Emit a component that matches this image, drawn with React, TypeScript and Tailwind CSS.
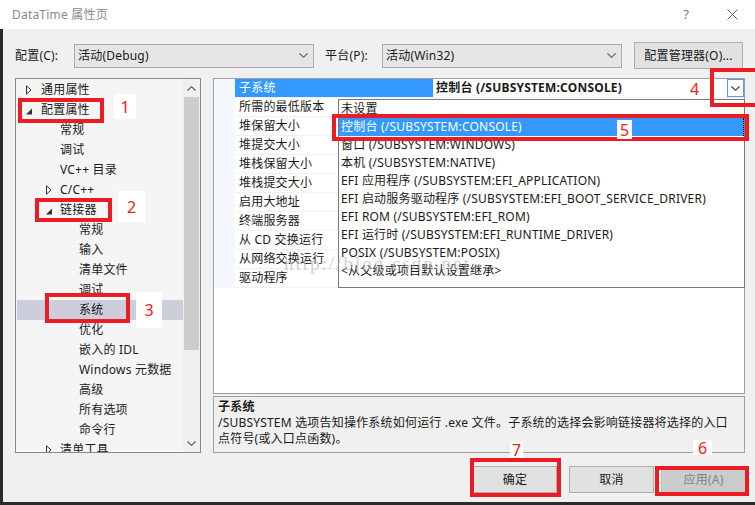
import React from 'react';

type TreeItem = { t: string; k: 'l0c' | 'l0o' | 'l1c' | 'l1o' | 'l1' | 'l2'; sel?: boolean };

const tree: TreeItem[] = [
  { t: '通用属性', k: 'l0c' },
  { t: '配置属性', k: 'l0o' },
  { t: '常规', k: 'l1' },
  { t: '调试', k: 'l1' },
  { t: 'VC++ 目录', k: 'l1' },
  { t: 'C/C++', k: 'l1c' },
  { t: '链接器', k: 'l1o' },
  { t: '常规', k: 'l2' },
  { t: '输入', k: 'l2' },
  { t: '清单文件', k: 'l2' },
  { t: '调试', k: 'l2' },
  { t: '系统', k: 'l2', sel: true },
  { t: '优化', k: 'l2' },
  { t: '嵌入的 IDL', k: 'l2' },
  { t: 'Windows 元数据', k: 'l2' },
  { t: '高级', k: 'l2' },
  { t: '所有选项', k: 'l2' },
  { t: '命令行', k: 'l2' },
  { t: '清单工具', k: 'l1c' },
];

const props = [
  '子系统',
  '所需的最低版本',
  '堆保留大小',
  '堆提交大小',
  '堆栈保留大小',
  '堆栈提交大小',
  '启用大地址',
  '终端服务器',
  '从 CD 交换运行',
  '从网络交换运行',
  '驱动程序',
];

const options = [
  '未设置',
  '控制台 (/SUBSYSTEM:CONSOLE)',
  '窗口 (/SUBSYSTEM:WINDOWS)',
  '本机 (/SUBSYSTEM:NATIVE)',
  'EFI 应用程序 (/SUBSYSTEM:EFI_APPLICATION)',
  'EFI 启动服务驱动程序 (/SUBSYSTEM:EFI_BOOT_SERVICE_DRIVER)',
  'EFI ROM (/SUBSYSTEM:EFI_ROM)',
  'EFI 运行时 (/SUBSYSTEM:EFI_RUNTIME_DRIVER)',
  'POSIX (/SUBSYSTEM:POSIX)',
  '<从父级或项目默认设置继承>',
];

function Closed() {
  return (
    <svg width="6" height="10" viewBox="0 0 6 10">
      <path d="M0.5 0.8 L5 5 L0.5 9.2 Z" fill="none" stroke="#333" strokeWidth="1" />
    </svg>
  );
}
function Open() {
  return (
    <svg width="6" height="7" viewBox="0 0 6 7" className="mt-[2px]">
      <path d="M6 0.5 L6 6.5 L0 6.5 Z" fill="#333" />
    </svg>
  );
}

function Chevron({ up = false, color = '#606060' }: { up?: boolean; color?: string }) {
  return (
    <svg width="9" height="5" viewBox="0 0 9 5">
      <path d={up ? 'M0.5 4.5 L4.5 0.7 L8.5 4.5' : 'M0.5 0.5 L4.5 4.3 L8.5 0.5'} fill="none" stroke={color} strokeWidth="1.1" />
    </svg>
  );
}

function TreeRow({ it }: { it: TreeItem }) {
  const base = 'h-[20px] flex items-center whitespace-nowrap';
  const sel = it.sel ? ' bg-[#cccedb] ml-[1px]' : '';
  if (it.k === 'l0c' || it.k === 'l0o') {
    return (
      <div className={base + ' pl-[10px]' + sel}>
        <span className="w-[15px] flex items-center">{it.k === 'l0c' ? <Closed /> : <Open />}</span>
        <span>{it.t}</span>
      </div>
    );
  }
  if (it.k === 'l1c' || it.k === 'l1o') {
    return (
      <div className={base + ' pl-[30px]' + sel}>
        <span className="w-[14px] flex items-center">{it.k === 'l1c' ? <Closed /> : <Open />}</span>
        <span>{it.t}</span>
      </div>
    );
  }
  if (it.k === 'l1') {
    return <div className={base + ' pl-[44px]' + sel}>{it.t}</div>;
  }
  return <div className={base + (it.sel ? ' pl-[62px] bg-[#cccedb] ml-[1px]' : ' pl-[63px]')}>{it.t}</div>;
}

function RedBox({ c }: { c: string }) {
  return <div className={'absolute border-[4px] border-[#ec1c24] ' + c} />;
}
function Label({ c, n }: { c: string; n: string }) {
  return (
    <div className={'absolute bg-white flex items-center justify-center text-[16px] leading-none tracking-normal text-[#ec1c24] ' + c}>
      {n}
    </div>
  );
}

export default function App() {
  return (
    <div className="relative w-[755px] h-[505px] overflow-hidden bg-[#2b2b2b] flex flex-col font-['Noto_Sans','Noto_Sans_CJK_SC',sans-serif] text-[12px] tracking-[0.2px] text-[#1a1a1a]">
      {/* Title bar */}
      <div className="h-[29px] bg-white flex items-center shrink-0">
        <span className="ml-[12px] text-[12px] text-[#8a8a8a]">DataTime 属性页</span>
        <span className="ml-auto mr-[38px] text-[13px] text-[#777]">?</span>
        <svg width="11" height="11" viewBox="0 0 11 11" className="mr-[17px]">
          <path d="M0.5 0.5 L10.5 10.5 M10.5 0.5 L0.5 10.5" stroke="#666" strokeWidth="1" />
        </svg>
      </div>

      {/* Body */}
      <div className="flex-1 ml-[3px] mb-[3px] bg-[#f0f0f0] flex flex-col">
        {/* Config row */}
        <div className="mt-[13px] h-[27px] flex items-center pl-[12px]">
          <span className="w-[59px]">配置(C):</span>
          <div className="w-[240px] h-[24px] border border-[#acacac] bg-[#e5e5e5] flex items-center justify-between pl-[3px] pr-[5px]">
            <span>活动(Debug)</span>
            <Chevron />
          </div>
          <span className="ml-[11px] w-[57px]">平台(P):</span>
          <div className="w-[240px] h-[24px] border border-[#acacac] bg-[#e5e5e5] flex items-center justify-between pl-[3px] pr-[5px]">
            <span>活动(Win32)</span>
            <Chevron />
          </div>
          <div className="ml-[12px] w-[109px] h-[27px] border border-[#adadad] bg-[#e1e1e1] flex items-center justify-center">
            配置管理器(O)...
          </div>
        </div>

        {/* Main area */}
        <div className="mt-[9px] flex pl-[12px]">
          {/* Tree */}
          <div className="w-[186px] h-[375px] border border-[#828790] bg-[#f5f5f5] flex">
            <div className="flex-1 overflow-hidden pt-[1px]">
              {tree.map((it, i) => (
                <TreeRow key={i} it={it} />
              ))}
            </div>
            <div className="w-[17px] flex flex-col bg-[#f0f0f0]">
              <div className="h-[18px] flex items-center justify-center">
                <Chevron up color="#555" />
              </div>
              <div className="h-[253px] mx-[1px] bg-[#cdcdcd]" />
              <div className="flex-1" />
              <div className="h-[17px] flex items-center justify-center">
                <Chevron color="#555" />
              </div>
            </div>
          </div>

          {/* Right column */}
          <div className="ml-[12px] w-[532px] flex flex-col">
            <div className="h-[316px] border border-[#a0a0a0] bg-white">
              {props.map((p, i) => (
                <div key={i} className="h-[19px] flex">
                  <div className="w-[21px] bg-[#f4f7fc]" />
                  <div
                    className={
                      'w-[198px] flex items-center pl-[4px] whitespace-nowrap border-b border-[#eef1f6] ' +
                      (i === 0 ? 'bg-[#3399ff] text-white' : 'bg-white')
                    }
                  >
                    {p}
                  </div>
                  <div className="flex-1 flex items-center pl-[3px] border-b border-[#eef1f6]">
                    {i === 0 && (
                      <>
                        <span className="font-bold">控制台 (/SUBSYSTEM:CONSOLE)</span>
                        <div className="ml-auto w-[17px] h-[18px] border border-[#569de5] bg-white flex items-center justify-center">
                          <Chevron color="#333" />
                        </div>
                      </>
                    )}
                  </div>
                </div>
              ))}
            </div>
            <div className="mt-[2px] h-[57px] border border-[#a0a0a0] bg-[#f0f0f0] px-[4px] pt-[2px] leading-[16px] whitespace-nowrap">
              <div className="font-bold">子系统</div>
              <div>/SUBSYSTEM 选项告知操作系统如何运行 .exe 文件。子系统的选择会影响链接器将选择的入口</div>
              <div>点符号(或入口点函数)。</div>
            </div>
          </div>
        </div>

        {/* Buttons */}
        <div className="mt-[13px] h-[27px] flex justify-end pr-[9px]">
          <div className="w-[84px] h-[27px] border border-[#adadad] bg-[#e1e1e1] flex items-center justify-center">确定</div>
          <div className="ml-[12px] w-[85px] h-[27px] border border-[#adadad] bg-[#e1e1e1] flex items-center justify-center">取消</div>
          <div className="ml-[7px] w-[85px] h-[27px] border border-[#bfbfbf] bg-[#cccccc] text-[#838383] flex items-center justify-center">应用(A)</div>
        </div>
      </div>

      {/* Dropdown list overlay */}
      <div className="absolute left-[338px] top-[99px] w-[407px] h-[189px] border border-[#7a7a7a] bg-white">
        {options.map((o, i) => (
          <div
            key={i}
            className={
              'h-[18px] flex items-center pl-[2px] whitespace-nowrap ' +
              (i === 1 ? 'bg-[#3399ff] text-white border-r border-dotted border-black' : '')
            }
          >
            {o}
          </div>
        ))}
      </div>

      {/* Watermark */}
      <div className="absolute left-[284px] top-[250px] text-[19px] tracking-[2px] text-[#b0b0b0]/60 font-['Liberation_Serif',serif] pointer-events-none">
        http://blog.csdn.net
      </div>

      {/* Annotations */}
      <RedBox c="left-[18px] top-[98px] w-[86px] h-[25px]" />
      <Label c="left-[114px] top-[94px] w-[22px] h-[25px]" n="1" />
      <RedBox c="left-[35px] top-[198px] w-[77px] h-[24px]" />
      <Label c="left-[118px] top-[191px] w-[27px] h-[31px]" n="2" />
      <RedBox c="left-[45px] top-[293px] w-[85px] h-[30px]" />
      <Label c="left-[136px] top-[292px] w-[26px] h-[36px]" n="3" />
      <RedBox c="left-[710px] top-[68px] w-[50px] h-[39px]" />
      <Label c="left-[682px] top-[80px] w-[25px] h-[18px]" n="4" />
      <RedBox c="left-[332px] top-[114px] w-[417px] h-[27px]" />
      <Label c="left-[617px] top-[120px] w-[15px] h-[19px]" n="5" />
      <RedBox c="left-[470px] top-[458px] w-[91px] h-[39px]" />
      <Label c="left-[510px] top-[442px] w-[13px] h-[15px]" n="7" />
      <RedBox c="left-[655px] top-[466px] w-[94px] h-[30px]" />
      <Label c="left-[693px] top-[440px] w-[19px] h-[15px]" n="6" />
    </div>
  );
}
